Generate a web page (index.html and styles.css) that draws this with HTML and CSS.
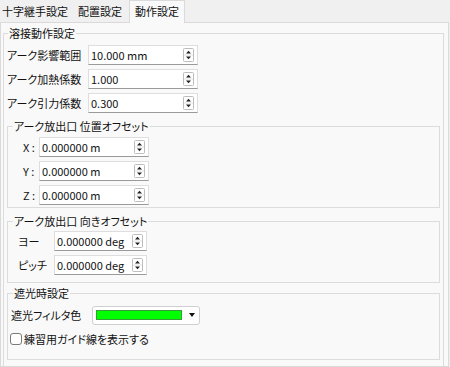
FILE: index.html
```html
<!DOCTYPE html>
<html lang="ja">
<head>
    <meta charset="UTF-8">
    <title>動作設定</title>
    <link rel="stylesheet" href="styles.css">
</head>
<body>
    <div class="tabs">
        <div class="tab first">十字継手設定</div>
        <div class="tab">配置設定</div>
        <div class="tab active">動作設定</div>
    </div>

    <div class="pane">
        <fieldset class="group outer">
            <legend>溶接動作設定</legend>

            <div class="row">
                <label class="lbl">アーク影響範囲</label>
                <div class="spin">
                    <span>10.000 mm</span>
                    <svg class="arrows" width="11" height="14" viewBox="0 0 11 14"><rect x="0.5" y="0.5" width="10" height="13" rx="1" fill="#fff" stroke="#bdbdbd"/><path d="M1 7h9" stroke="#e2e2e2"/><path d="M3 5.5h5L5.5 2.8z M3 8.5h5L5.5 11.2z" fill="#222"/></svg>
                </div>
            </div>
            <div class="row">
                <label class="lbl">アーク加熱係数</label>
                <div class="spin">
                    <span>1.000</span>
                    <svg class="arrows" width="11" height="14" viewBox="0 0 11 14"><rect x="0.5" y="0.5" width="10" height="13" rx="1" fill="#fff" stroke="#bdbdbd"/><path d="M1 7h9" stroke="#e2e2e2"/><path d="M3 5.5h5L5.5 2.8z M3 8.5h5L5.5 11.2z" fill="#222"/></svg>
                </div>
            </div>
            <div class="row">
                <label class="lbl">アーク引力係数</label>
                <div class="spin">
                    <span>0.300</span>
                    <svg class="arrows" width="11" height="14" viewBox="0 0 11 14"><rect x="0.5" y="0.5" width="10" height="13" rx="1" fill="#fff" stroke="#bdbdbd"/><path d="M1 7h9" stroke="#e2e2e2"/><path d="M3 5.5h5L5.5 2.8z M3 8.5h5L5.5 11.2z" fill="#222"/></svg>
                </div>
            </div>

            <fieldset class="group sub pos">
                <legend>アーク放出口 位置オフセット</legend>
                <div class="row">
                    <label class="lbl">X :</label>
                    <div class="spin">
                        <span>0.000000 m</span>
                        <svg class="arrows" width="11" height="14" viewBox="0 0 11 14"><rect x="0.5" y="0.5" width="10" height="13" rx="1" fill="#fff" stroke="#bdbdbd"/><path d="M1 7h9" stroke="#e2e2e2"/><path d="M3 5.5h5L5.5 2.8z M3 8.5h5L5.5 11.2z" fill="#222"/></svg>
                    </div>
                </div>
                <div class="row">
                    <label class="lbl">Y :</label>
                    <div class="spin">
                        <span>0.000000 m</span>
                        <svg class="arrows" width="11" height="14" viewBox="0 0 11 14"><rect x="0.5" y="0.5" width="10" height="13" rx="1" fill="#fff" stroke="#bdbdbd"/><path d="M1 7h9" stroke="#e2e2e2"/><path d="M3 5.5h5L5.5 2.8z M3 8.5h5L5.5 11.2z" fill="#222"/></svg>
                    </div>
                </div>
                <div class="row">
                    <label class="lbl">Z :</label>
                    <div class="spin">
                        <span>0.000000 m</span>
                        <svg class="arrows" width="11" height="14" viewBox="0 0 11 14"><rect x="0.5" y="0.5" width="10" height="13" rx="1" fill="#fff" stroke="#bdbdbd"/><path d="M1 7h9" stroke="#e2e2e2"/><path d="M3 5.5h5L5.5 2.8z M3 8.5h5L5.5 11.2z" fill="#222"/></svg>
                    </div>
                </div>
            </fieldset>

            <fieldset class="group sub dir">
                <legend>アーク放出口 向きオフセット</legend>
                <div class="row">
                    <label class="lbl">ヨー</label>
                    <div class="spin">
                        <span>0.000000 deg</span>
                        <svg class="arrows" width="11" height="14" viewBox="0 0 11 14"><rect x="0.5" y="0.5" width="10" height="13" rx="1" fill="#fff" stroke="#bdbdbd"/><path d="M1 7h9" stroke="#e2e2e2"/><path d="M3 5.5h5L5.5 2.8z M3 8.5h5L5.5 11.2z" fill="#222"/></svg>
                    </div>
                </div>
                <div class="row">
                    <label class="lbl">ピッチ</label>
                    <div class="spin">
                        <span>0.000000 deg</span>
                        <svg class="arrows" width="11" height="14" viewBox="0 0 11 14"><rect x="0.5" y="0.5" width="10" height="13" rx="1" fill="#fff" stroke="#bdbdbd"/><path d="M1 7h9" stroke="#e2e2e2"/><path d="M3 5.5h5L5.5 2.8z M3 8.5h5L5.5 11.2z" fill="#222"/></svg>
                    </div>
                </div>
            </fieldset>

            <fieldset class="group sub shade">
                <legend>遮光時設定</legend>
                <div class="row">
                    <label class="lbl">遮光フィルタ色</label>
                    <div class="combo">
                        <span class="swatch"></span>
                        <span class="caret"></span>
                    </div>
                </div>
                <div class="row check">
                    <span class="box"></span>
                    <label>練習用ガイド線を表示する</label>
                </div>
            </fieldset>
        </fieldset>
    </div>
</body>
</html>
```

FILE: styles.css
```css
* {
    box-sizing: border-box;
}

body {
    margin: 0;
    height: 367px;
    overflow: hidden;
    background-color: #f0f0f0;
    font-family: "Noto Sans CJK JP", "Noto Sans", sans-serif;
    font-size: 11px;
    font-feature-settings: "palt";
    color: #111;
}

/* tab bar */
.tabs {
    display: flex;
    height: 22px;
}

.tab {
    padding: 0 5px;
    line-height: 22px;
}

.tab.first {
    padding-left: 2px;
}

.tab.active {
    position: relative;
    z-index: 1;
    height: 23px;
    margin-left: 2px;
    line-height: 21px;
    background-color: #f9f9f9;
    border: 1px solid #dadada;
    border-bottom: none;
}

.pane {
    width: 449px;
    height: 345px;
    overflow: hidden;
    padding: 3px 4px 0 1px;
    background-color: #f9f9f9;
    border: 1px solid #dadada;
}

/* group boxes */
fieldset {
    margin: 0;
    padding: 0;
    min-width: 0;
    border: 1px solid #dcdcdc;
}

legend {
    padding: 0 1px;
    line-height: 14px;
}

.outer {
    margin-left: 1px;
    padding: 5px 3px 40px 3px;
}

.outer > legend {
    margin-left: 1px;
}

.sub > legend {
    margin-left: 5px;
}

.pos {
    margin-top: 6px;
    padding: 4px 0 2px 0;
}

.dir {
    margin-top: 6px;
    padding: 3px 0 7px 0;
}

.shade {
    margin-top: 3px;
    padding: 5px 0 10px 0;
}

/* rows */
.row {
    display: flex;
    align-items: center;
    height: 20px;
    margin-bottom: 4px;
}

.row:last-child {
    margin-bottom: 0;
}

.pos .row {
    padding-left: 15px;
}

.dir .row {
    padding-left: 10px;
}

.shade .row {
    padding-left: 3px;
}

.lbl {
    flex: none;
    width: 81px;
}

.pos .lbl {
    width: 16px;
}

.dir .lbl {
    width: 36px;
}

.spin {
    display: flex;
    align-items: center;
    width: 110px;
    height: 20px;
    padding: 0 3px 0 2px;
    background-color: #fff;
    border: 1px solid #dedede;
    border-bottom-color: #9a9a9a;
}

.spin span {
    flex: 1;
}

.dir .spin {
    width: 93px;
}

.arrows {
    flex: none;
    display: block;
}

/* colour combo */
.combo {
    display: flex;
    align-items: center;
    width: 108px;
    height: 19px;
    padding-left: 3px;
    background-color: #fff;
    border: 1px solid #cfcfcf;
    border-radius: 3px;
}

.swatch {
    width: 86px;
    height: 10px;
    background-color: #00ff00;
    border: 1px solid #3a9a3a;
}

.caret {
    margin-left: 7px;
    border-left: 3.5px solid transparent;
    border-right: 3.5px solid transparent;
    border-top: 4px solid #111;
}

.check {
    margin-top: 3px;
}

.shade .check {
    padding-left: 2px;
}

.check .box {
    width: 12px;
    height: 12px;
    margin-right: 2px;
    background-color: #fff;
    border: 1px solid #7a7a7a;
    border-radius: 3px;
}
```
